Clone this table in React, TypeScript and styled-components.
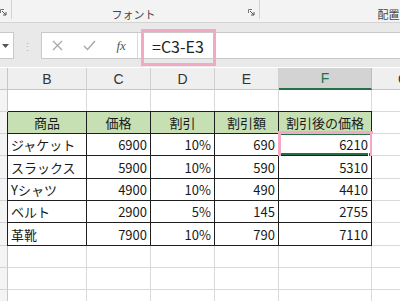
import React from 'react'
import styled, { createGlobalStyle } from 'styled-components'

const GlobalStyle = createGlobalStyle`
  html, body {
    margin: 0;
    padding: 0;
    background: #fff;
  }
  body {
    width: 400px;
    height: 301px;
    overflow: hidden;
    font-family: "Noto Sans CJK JP", "Noto Sans", sans-serif;
  }
`

const Window = styled.div`
  display: flex;
  flex-direction: column;
  width: 400px;
  height: 301px;
  overflow: hidden;
`

/* ribbon strip with group captions */

const Ribbon = styled.div`
  display: flex;
  flex: 0 0 22px;
  background: #f3f3f3;
  border-bottom: 1px solid #d4d4d4;
  box-shadow: 0 1px 2px rgba(0, 0, 0, 0.06);
  overflow: hidden;
`

const RibbonGroup = styled.div<{ $width: number }>`
  flex: 0 0 ${p => p.$width}px;
  display: grid;
  grid-template-columns: 1fr auto 1fr;
  align-items: end;
  padding: 0 4px 3px 0;
  box-sizing: border-box;
  border-right: 1px solid #d2d2d2;
  margin-bottom: 3px;
`

const GroupLabel = styled.span`
  grid-column: 2;
  font-size: 11px;
  line-height: 12px;
  color: #444;
  transform: translateY(4px);
`

const LauncherBox = styled.span`
  grid-column: 3;
  justify-self: end;
  display: flex;
  margin-bottom: 0;
`

const Launcher = () => (
  <LauncherBox>
    <svg width="7" height="7" viewBox="0 0 7 7">
      <path d="M0.5 4V0.5H4" fill="none" stroke="#777" strokeWidth="1" />
      <path d="M2 2L6 6M6 3V6H3" fill="none" stroke="#555" strokeWidth="1" />
    </svg>
  </LauncherBox>
)

/* formula bar */

const FormulaBar = styled.div`
  display: flex;
  align-items: center;
  flex: 0 0 44px;
  padding: 9px 0 8px;
  box-sizing: border-box;
  background: #e9e9e9;
`

const NameBox = styled.div`
  flex: 0 0 14px;
  height: 27px;
  box-sizing: border-box;
  background: #fff;
  border: 1px solid #c9c9c9;
  border-left: none;
  display: flex;
  align-items: center;
  padding-left: 2px;
`

const Grip = styled.div`
  flex: 0 0 27px;
  display: flex;
  justify-content: center;
  color: #b5b5b5;
  font-size: 11px;
`

const FormulaBox = styled.div`
  flex: 1;
  height: 27px;
  box-sizing: border-box;
  background: #fff;
  border: 1px solid #c9c9c9;
  border-right: none;
  display: flex;
  align-items: center;
`

const FxButtons = styled.div`
  flex: 0 0 96px;
  height: 100%;
  box-sizing: border-box;
  border-right: 1px solid #dcdcdc;
  display: grid;
  grid-template-columns: repeat(3, 1fr);
  align-items: center;
  justify-items: center;
`

const FxLabel = styled.span`
  font-family: "Liberation Serif", serif;
  font-style: italic;
  font-size: 13px;
  color: #555;
`

const FormulaInput = styled.div`
  position: relative;
  flex: 1;
  padding-left: 14px;
  font-size: 16px;
  color: #222;
`

const Callout = styled.div<{ $top: number; $right: number; $bottom: number; $left: number }>`
  position: absolute;
  top: ${p => p.$top}px;
  right: ${p => p.$right}px;
  bottom: ${p => p.$bottom}px;
  left: ${p => p.$left}px;
  border: 3px solid #f3a8c6;
  pointer-events: none;
`

const FormulaCallout = styled(Callout)`
  right: auto;
  width: 75px;
  height: 37px;
  box-sizing: border-box;
`

/* worksheet */

const Sheet = styled.div`
  display: grid;
  grid-template-columns: 8px 79px 64px 64px 64px 93px 64px;
  grid-template-rows: 23px 22px 22px 22px 23px 22px 22px 23px 22px 22px 22px;
  flex: 1;
`

const ColHead = styled.div<{ $active?: boolean }>`
  display: flex;
  align-items: center;
  justify-content: center;
  box-sizing: border-box;
  background: ${p => (p.$active ? '#d3d3d3' : '#efefef')};
  color: ${p => (p.$active ? '#217346' : '#333')};
  border-right: 1px solid ${p => (p.$active ? '#bdbdbd' : '#d0d0d0')};
  border-bottom: ${p => (p.$active ? '2px solid #217346' : '1px solid #c6c6c6')};
  font-family: "Liberation Sans", sans-serif;
  font-size: 14px;
  margin-top: 1px;
`

const RowHead = styled.div<{ $corner?: boolean }>`
  box-sizing: border-box;
  background: ${p => (p.$corner ? '#efefef' : '#f4f4f4')};
  border-right: 1px solid #c6c6c6;
  border-bottom: 1px solid ${p => (p.$corner ? '#c6c6c6' : '#d4d4d4')};
  margin-top: ${p => (p.$corner ? '1px' : '0')};
`

const Cell = styled.div<{
  $align?: 'left' | 'center' | 'right'
  $fill?: string
  $boxed?: boolean
  $edgeTop?: boolean
  $edgeLeft?: boolean
}>`
  position: relative;
  display: flex;
  align-items: center;
  justify-content: ${p =>
    p.$align === 'right' ? 'flex-end' : p.$align === 'center' ? 'center' : 'flex-start'};
  padding: 0 3px;
  box-sizing: border-box;
  background: ${p => p.$fill ?? '#fff'};
  border-right: 1px solid ${p => (p.$boxed ? '#1e1e1e' : '#d9d9d9')};
  border-bottom: 1px solid ${p => (p.$boxed ? '#1e1e1e' : '#d9d9d9')};
  box-shadow: ${p =>
    [p.$edgeTop && '0 -1px 0 #1e1e1e', p.$edgeLeft && '-1px 0 0 #1e1e1e']
      .filter(Boolean)
      .join(', ') || 'none'};
  font-size: 13px;
  color: #1a1a1a;
  white-space: nowrap;
`

const Selection = styled.div`
  position: absolute;
  inset: -1px -1px 0 -1px;
  border: 2px solid #217346;
  pointer-events: none;
`

const FillHandle = styled.div`
  position: absolute;
  right: -4px;
  bottom: -4px;
  width: 5px;
  height: 5px;
  background: #217346;
  border: 1px solid #fff;
`

const columns = ['B', 'C', 'D', 'E', 'F', 'G']
const headings = ['商品', '価格', '割引', '割引額', '割引後の価格']

const products: [string, number, string, number, number][] = [
  ['ジャケット', 6900, '10%', 690, 6210],
  ['スラックス', 5900, '10%', 590, 5310],
  ['Yシャツ', 4900, '10%', 490, 4410],
  ['ベルト', 2900, '5%', 145, 2755],
  ['革靴', 7900, '10%', 790, 7110],
]

const EmptyRow = () => (
  <>
    <RowHead />
    {columns.map(c => (
      <Cell key={c} />
    ))}
  </>
)

export default function App() {
  return (
    <Window>
      <GlobalStyle />
      <Ribbon>
        <RibbonGroup $width={8}>
          <Launcher />
        </RibbonGroup>
        <RibbonGroup $width={248}>
          <GroupLabel>フォント</GroupLabel>
          <Launcher />
        </RibbonGroup>
        <RibbonGroup $width={262}>
          <GroupLabel>配置</GroupLabel>
        </RibbonGroup>
      </Ribbon>

      <FormulaBar>
        <NameBox>
          <svg width="7" height="4" viewBox="0 0 7 4">
            <path d="M0 0H7L3.5 4Z" fill="#555" />
          </svg>
        </NameBox>
        <Grip>⋮</Grip>
        <FormulaBox>
          <FxButtons>
            <svg width="11" height="11" viewBox="0 0 11 11">
              <path d="M1 1L10 10M10 1L1 10" stroke="#a8a8a8" strokeWidth="1.3" />
            </svg>
            <svg width="13" height="11" viewBox="0 0 13 11">
              <path d="M1 6L4.5 9.5L12 1" fill="none" stroke="#a8a8a8" strokeWidth="1.4" />
            </svg>
            <FxLabel>fx</FxLabel>
          </FxButtons>
          <FormulaInput>
            =C3-E3
            <FormulaCallout $top={-5} $right={0} $bottom={0} $left={3} />
          </FormulaInput>
        </FormulaBox>
      </FormulaBar>

      <Sheet>
        <RowHead $corner />
        {columns.map(c => (
          <ColHead key={c} $active={c === 'F'}>
            {c}
          </ColHead>
        ))}

        <EmptyRow />

        <RowHead />
        {headings.map((h, i) => (
          <Cell key={h} $align="center" $fill="#c6e0b4" $boxed $edgeTop $edgeLeft={i === 0}>
            {h}
          </Cell>
        ))}
        <Cell />

        {products.map(([name, price, rate, discount, total], r) => (
          <React.Fragment key={name}>
            <RowHead />
            <Cell $boxed $edgeLeft>
              {name}
            </Cell>
            <Cell $boxed $align="right">
              {price}
            </Cell>
            <Cell $boxed $align="right">
              {rate}
            </Cell>
            <Cell $boxed $align="right">
              {discount}
            </Cell>
            <Cell $boxed $align="right">
              {total}
              {r === 0 && (
                <>
                  <Selection />
                  <FillHandle />
                  <Callout $top={-3} $right={-2} $bottom={-5} $left={-1} />
                </>
              )}
            </Cell>
            <Cell />
          </React.Fragment>
        ))}

        <EmptyRow />
        <EmptyRow />
        <EmptyRow />
      </Sheet>
    </Window>
  )
}
